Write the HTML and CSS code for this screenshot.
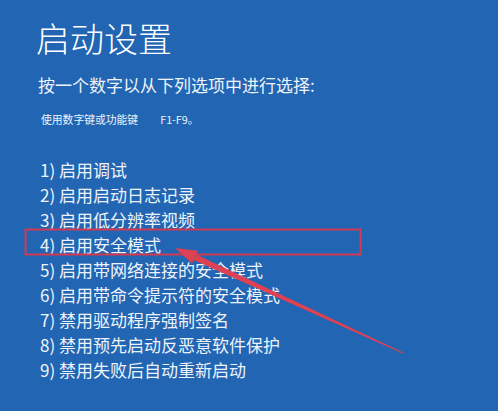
FILE: index.html
```html
<!DOCTYPE html>
<html lang="zh-CN">
<head>
<meta charset="utf-8">
<title>启动设置</title>
<link rel="stylesheet" href="styles.css">
</head>
<body>
<main class="screen">
  <h1 class="title">启动设置</h1>
  <p class="prompt">按一个数字以从下列选项中进行选择:</p>
  <p class="hint">使用数字键或功能键<span class="keys">F1-F9。</span></p>
  <ol class="options">
    <li>1) 启用调试</li>
    <li>2) 启用启动日志记录</li>
    <li>3) 启用低分辨率视频</li>
    <li>4) 启用安全模式</li>
    <li>5) 启用带网络连接的安全模式</li>
    <li>6) 启用带命令提示符的安全模式</li>
    <li>7) 禁用驱动程序强制签名</li>
    <li>8) 禁用预先启动反恶意软件保护</li>
    <li>9) 禁用失败后自动重新启动</li>
  </ol>
  <svg class="annotation" width="498" height="411" viewBox="0 0 498 411" aria-hidden="true">
    <rect class="mark-box" x="25.5" y="229.5" width="335" height="25"/>
    <polygon class="mark-arrow" points="193.7,260 196.3,254.4 403.2,352.55 402.8,353.45"/>
    <polygon class="mark-arrow" points="175,248 197.9,250.8 192.1,263.6"/>
  </svg>
</main>
</body>
</html>
```

FILE: styles.css
```css
html, body {
  margin: 0;
  padding: 0;
}

body {
  background: #2165b3;
  font-family: "Noto Sans CJK SC", "Noto Sans", sans-serif;
  color: #eef3fa;
}

.screen {
  position: relative;
  width: 498px;
  height: 411px;
  box-sizing: border-box;
  padding: 21px 0 0 38px;
  overflow: hidden;
}

.title {
  margin: 0 0 0 -2px;
  font-size: 34px;
  line-height: 34px;
  font-weight: 300;
  color: #ffffff;
}

.prompt {
  margin: 21px 0 0 0;
  font-size: 17px;
  line-height: 17px;
  font-weight: 400;
}

.hint {
  margin: 21px 0 0 3px;
  font-size: 10.8px;
  line-height: 11px;
}

.keys {
  margin-left: 22px;
}

.options {
  list-style: none;
  margin: 32px 0 0 0;
  padding: 0 0 0 2px;
  font-size: 17px;
  line-height: 25px;
}

.annotation {
  position: absolute;
  top: 0;
  left: 0;
  pointer-events: none;
}

.mark-box {
  fill: none;
  stroke: #d23a52;
  stroke-width: 2;
}

.mark-arrow {
  fill: #de4252;
}
```
